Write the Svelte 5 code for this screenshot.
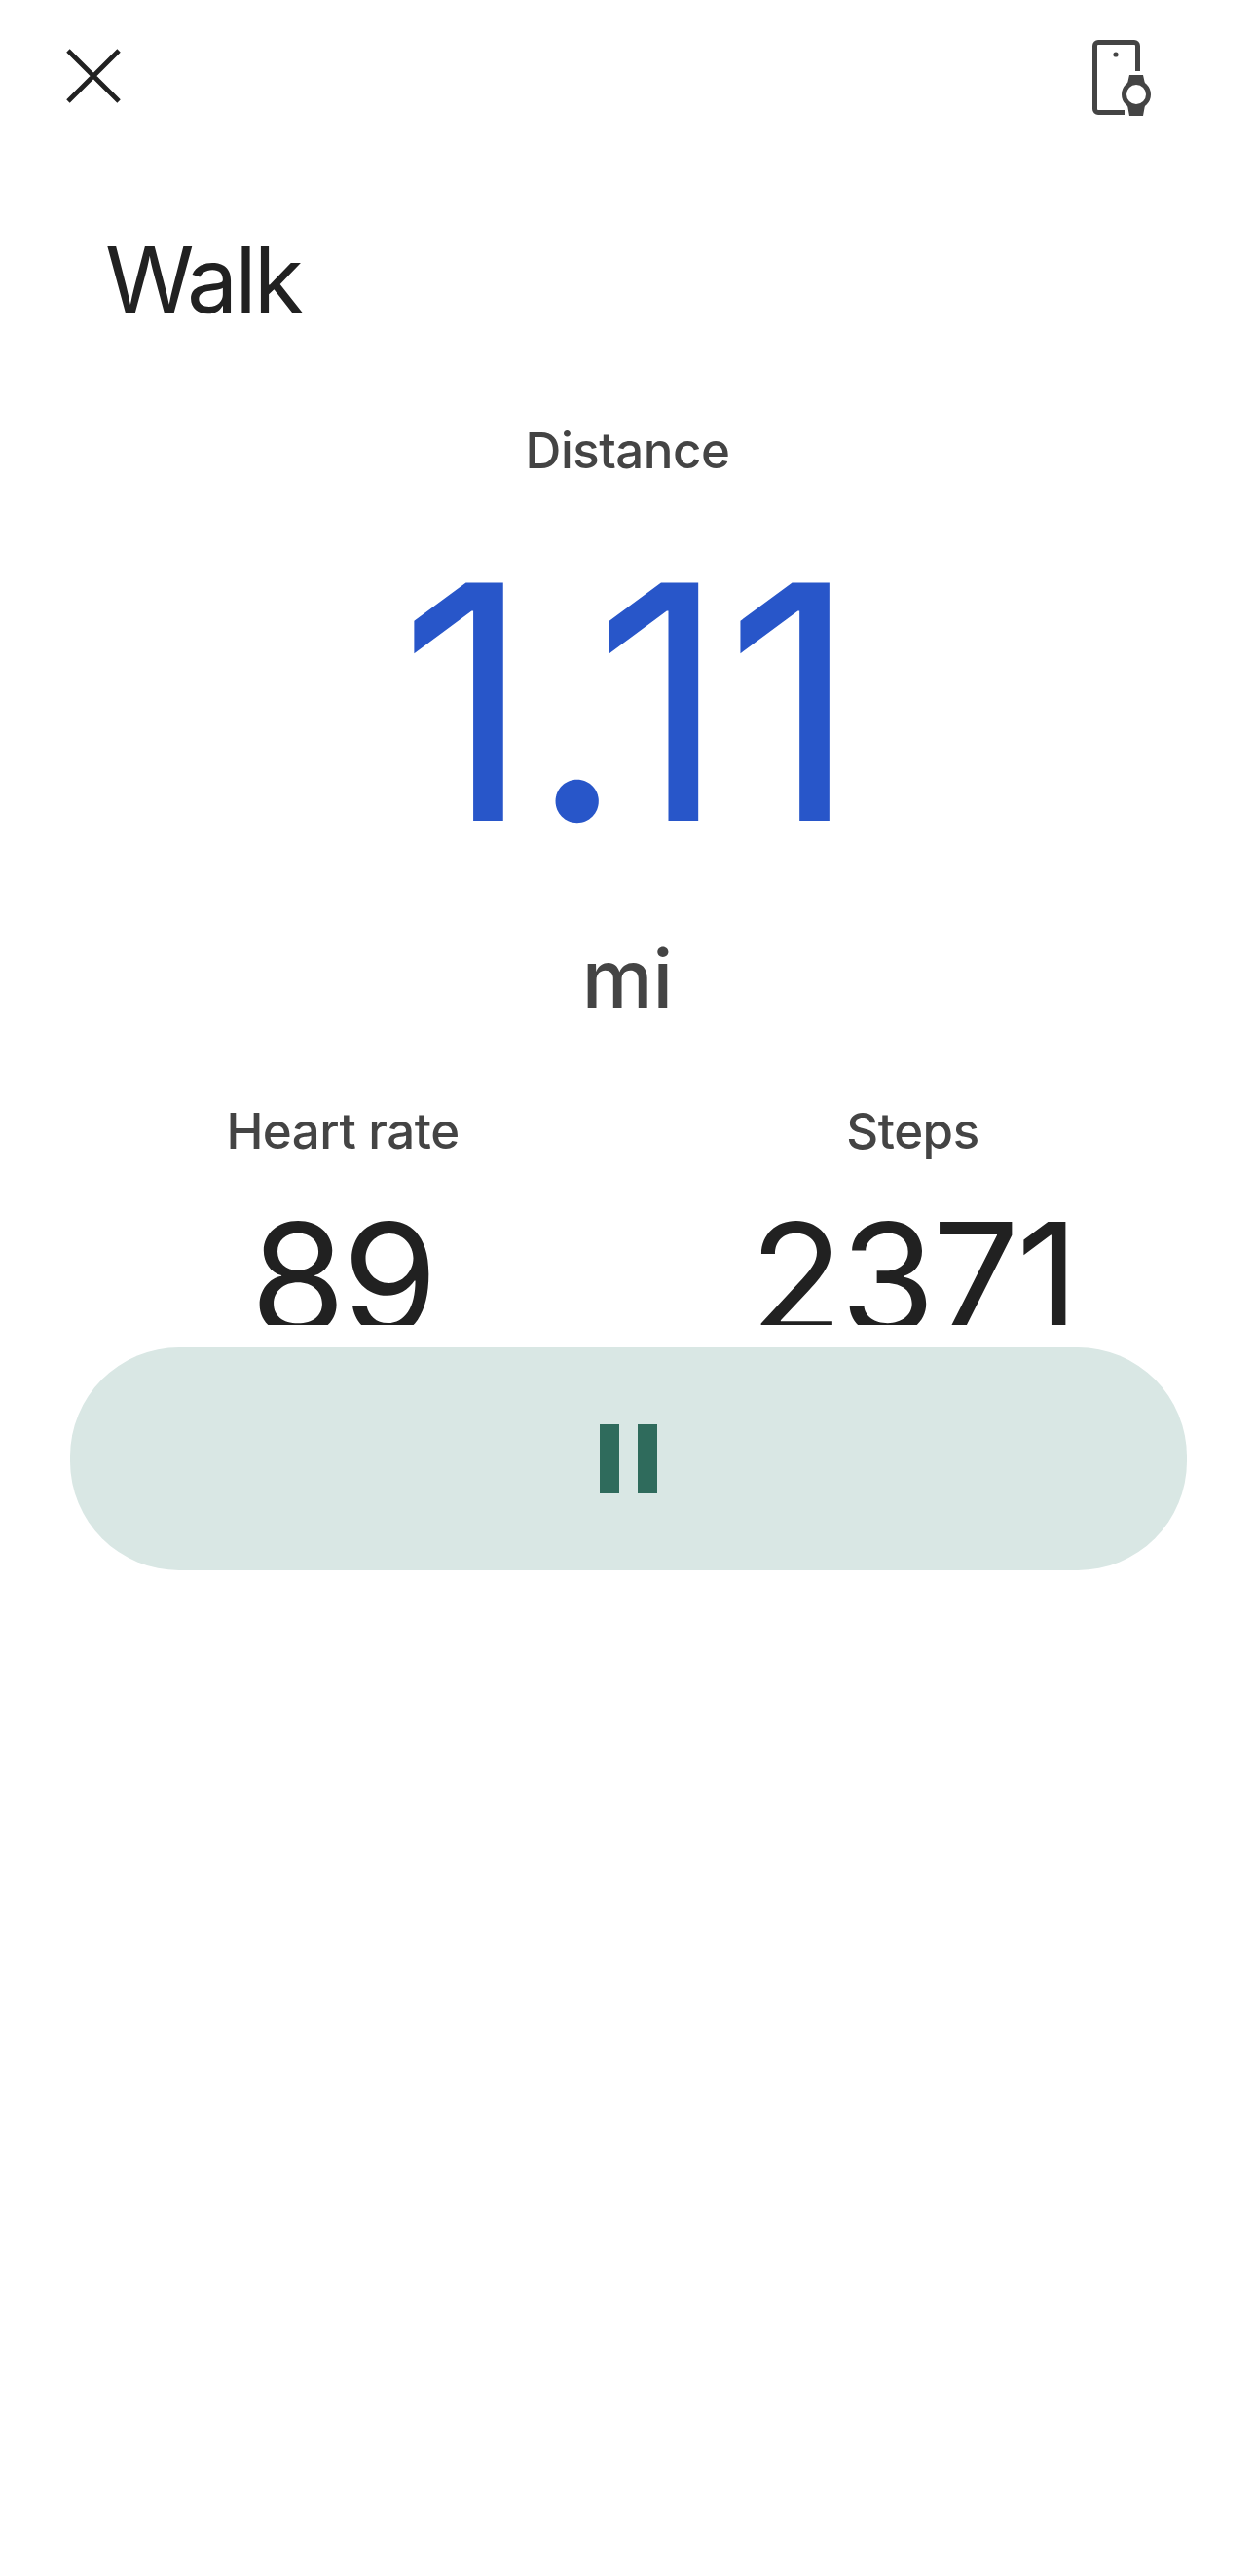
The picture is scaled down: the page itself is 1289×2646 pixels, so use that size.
<script>
  const stats = [
    { label: 'Heart rate', value: '89' },
    { label: 'Steps', value: '2371' }
  ];
</script>

<div class="page">
  <div class="scroll">
    <header class="top">
      <svg class="close" viewBox="0 0 58 58" aria-label="Close"><path d="M2 2 56 56M56 2 2 56" /></svg>
      <svg class="device" viewBox="0 0 60 80" aria-label="Devices">
        <path class="outline" d="M33 75.500H6a3.500 3.500 0 0 1-3.500-3.500V7A3.500 3.500 0 0 1 6 3.500h37A3.500 3.500 0 0 1 46.500 7V33" />
        <circle class="dot" cx="24" cy="16" r="2.600" />
        <path class="strap" d="M36 46l2-9h14l2 9zM36 68l2 11h14l2-11z" />
        <circle class="face" cx="45" cy="57" r="12.500" />
      </svg>
    </header>
    <h1>Walk</h1>
    <div class="label primary-label">Distance</div>
    <div class="big">1.11</div>
    <div class="unit">mi</div>
    <div class="stats">
      {#each stats as s}
        <div class="stat">
          <div class="label">{s.label}</div>
          <div class="value">{s.value}</div>
        </div>
      {/each}
    </div>
  </div>
  <div class="pause-wrap">
    <button class="pause" aria-label="Pause"><span></span><span></span></button>
  </div>
</div>

<style>
  :global(body) { margin: 0; background: #fff; }
  .page {
    width: 1289px; height: 2646px; background: #fff; overflow: hidden;
    font-family: Inter, "Liberation Sans", sans-serif;
  }
  .scroll { height: 1361px; overflow: hidden; }
  .top {
    display: flex; justify-content: space-between; align-items: flex-start;
    padding: 40px 107px 0 68px; height: 120px; box-sizing: border-box;
  }
  .close { width: 56px; height: 56px; margin-top: 10px; }
  .close path { stroke: #212121; stroke-width: 5; fill: none; }
  .device { width: 60px; height: 80px; }
  .outline { fill: none; stroke: #444; stroke-width: 5; }
  .dot { fill: #444; }
  .strap { fill: #444; }
  .face { fill: #fff; stroke: #444; stroke-width: 5; }
  h1 {
    margin: 0; padding-left: 108px;
    font-weight: 400; font-size: 93px; line-height: 116px; height: 116px; margin-top: 109px;
    color: #212121; letter-spacing: -3px;
  }
  .label {
    font-size: 51px; line-height: 60px; color: #444; font-weight: 500;
    text-align: center; letter-spacing: -0.500px;
  }
  .primary-label { margin-top: 88px; }
  .big {
    font-size: 336px; line-height: 340px; height: 340px; font-weight: 400;
    text-align: center; color: #2856c9; margin-top: 58px; letter-spacing: -2px;
  }
  .unit {
    font-size: 82px; line-height: 90px; color: #444;
    text-align: center; font-weight: 500; margin-top: 70px;
  }
  .stats { display: grid; grid-template-columns: 584px 587px; padding-left: 60px; margin-top: 81px; }
  .value {
    font-size: 158px; line-height: 180px; color: #212121; font-weight: 400;
    text-align: center; margin-top: 31px; letter-spacing: -3px;
  }
  .pause-wrap { padding: 23px 70px 0 72px; }
  .pause {
    width: 100%; height: 229px; border: 0; border-radius: 112px; background: #d9e7e4;
    display: flex; align-items: center; justify-content: center; gap: 19px; padding: 0;
  }
  .pause span { width: 20px; height: 71px; background: #2f6b5c; display: block; }
</style>
